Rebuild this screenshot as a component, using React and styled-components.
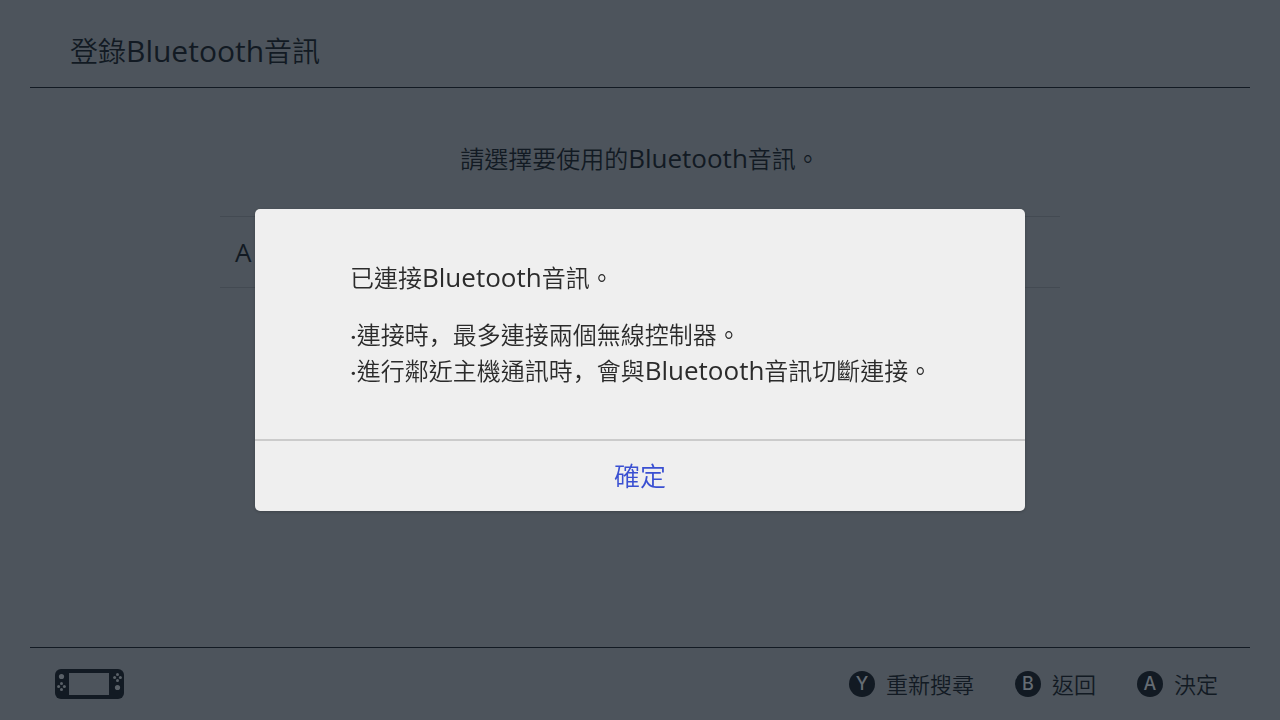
import React from "react";
import styled, { createGlobalStyle } from "styled-components";

const App = () => {
  const [modalOn, setModalOn] = React.useState(true);

  const closeModal = () => {
    setModalOn(false);
  };

  return (
    <>
      <GlobalStyle />
      <Page>
        <Header>
          <Title>
            登錄<Latin size={30}>Bluetooth</Latin>音訊
          </Title>
        </Header>

        <Content>
          <Guide>
            請選擇要使用的<Latin>Bluetooth</Latin>音訊。
          </Guide>
          <DeviceList>
            <li>
              <Device type="button">A</Device>
            </li>
          </DeviceList>
        </Content>

        <Footer>
          <ConsoleIcon />
          <Actions>
            <Action label="Y">重新搜尋</Action>
            <Action label="B">返回</Action>
            <Action label="A">決定</Action>
          </Actions>
        </Footer>
      </Page>

      {modalOn && (
        <Overlay>
          <Dialog role="dialog" aria-modal="true" aria-labelledby="dialog-title">
            <DialogBody>
              <Message id="dialog-title">
                已連接<Latin>Bluetooth</Latin>音訊。
              </Message>
              <Notes>
                <li>
                  <Dot>·</Dot>連接時<Comma>，</Comma>最多連接兩個無線控制器。
                </li>
                <li>
                  <Dot>·</Dot>進行鄰近主機通訊時<Comma>，</Comma>會與
                  <Latin>Bluetooth</Latin>音訊切斷連接。
                </li>
              </Notes>
            </DialogBody>
            <Confirm type="button" onClick={closeModal}>
              確定
            </Confirm>
          </Dialog>
        </Overlay>
      )}
    </>
  );
};

export default App;

const Action = ({ label, children }) => (
  <ActionButton type="button">
    <Badge>{label}</Badge>
    <ActionText>{children}</ActionText>
  </ActionButton>
);

const ConsoleIcon = () => (
  <svg width="70" height="30" viewBox="0 0 70 30" aria-hidden="true">
    <rect width="69" height="30" rx="6" fill="#121a23" />
    <rect x="14" y="4" width="40" height="22" fill="#4d545c" />
    <g fill="#5a6168">
      <circle cx="6.5" cy="7.5" r="2.6" />
      <circle cx="6.5" cy="14.6" r="1.5" />
      <circle cx="6.5" cy="20.4" r="1.5" />
      <circle cx="3.6" cy="17.5" r="1.5" />
      <circle cx="9.4" cy="17.5" r="1.5" />
      <circle cx="62.5" cy="5.6" r="1.5" />
      <circle cx="62.5" cy="11.4" r="1.5" />
      <circle cx="59.6" cy="8.5" r="1.5" />
      <circle cx="65.4" cy="8.5" r="1.5" />
      <circle cx="62.5" cy="18.5" r="2.6" />
    </g>
  </svg>
);

const GlobalStyle = createGlobalStyle`
  * {
    box-sizing: border-box;
  }

  body {
    margin: 0;
    background-color: #4d545c;
    color: #121a23;
    font-family: "Noto Sans CJK TC", sans-serif;
    font-weight: 350;
  }

  button {
    padding: 0;
    border: none;
    background: none;
    color: inherit;
    font: inherit;
    cursor: pointer;
  }

  ul {
    margin: 0;
    padding: 0;
    list-style: none;
  }
`;

const Page = styled.div`
  min-height: 100vh;
  display: flex;
  flex-direction: column;
  padding: 0 30px;
`;

const Header = styled.header`
  height: 88px;
  display: flex;
  align-items: center;
  padding: 12px 40px 0;
  border-bottom: 1px solid #121a23;
`;

const Title = styled.h1`
  margin: 0;
  font-size: 28px;
  font-weight: 350;
  line-height: 40px;
`;

const Latin = styled.span`
  font-family: "Open Sans", "Noto Sans", sans-serif;
  font-size: ${(props) => props.size || 26}px;
  font-weight: 400;
  line-height: 1;
`;

const Content = styled.main`
  flex: 1;
  width: 100%;
  max-width: 840px;
  margin: 0 auto;
  padding-top: 52px;
`;

const Guide = styled.p`
  margin: 0 0 40px;
  font-size: 24px;
  line-height: 36px;
  text-align: center;
`;

const DeviceList = styled.ul`
  border-top: 1px solid #434a52;
`;

const Device = styled.button`
  width: 100%;
  height: 71px;
  padding: 0 15px;
  border-bottom: 1px solid #434a52;
  font-family: "Open Sans", "Noto Sans", sans-serif;
  font-size: 26px;
  font-weight: 400;
  text-align: left;
`;

const Footer = styled.footer`
  height: 73px;
  display: flex;
  align-items: center;
  justify-content: space-between;
  padding: 0 32px 0 25px;
  border-top: 1px solid #121a23;
`;

const Actions = styled.div`
  display: flex;
  gap: 41px;
`;

const ActionButton = styled.button`
  display: flex;
  align-items: center;
  gap: 11px;
  font-size: 22px;
  line-height: 32px;
`;

const ActionText = styled.span`
  padding-bottom: 3px;
`;

const Badge = styled.span`
  width: 26px;
  height: 26px;
  display: flex;
  align-items: center;
  justify-content: center;
  border-radius: 50%;
  background-color: #121a23;
  color: #656c73;
  font-family: Inter, sans-serif;
  font-size: 18px;
  font-weight: 500;
  line-height: 26px;
`;

const Overlay = styled.div`
  position: fixed;
  inset: 0;
  display: flex;
  align-items: center;
  justify-content: center;
`;

const Dialog = styled.section`
  width: 770px;
  max-width: 100%;
  border-radius: 5px;
  background-color: #efefef;
  color: #2b2b2b;
  box-shadow: 0 1px 3px rgba(0, 0, 0, 0.2);
`;

const DialogBody = styled.div`
  padding: 50px 95px 51px;
  font-size: 24px;
  line-height: 36px;
`;

const Message = styled.p`
  margin: 0 0 21px;
`;

const Notes = styled.ul`
  white-space: nowrap;
`;

const Dot = styled.span`
  font-family: Inter, sans-serif;
  font-size: 20px;
  font-weight: 700;
  line-height: 1;
`;

/* the TC comma sits in the middle of its cell, this one at the lower left */
const Comma = styled.span`
  font-family: "Noto Sans CJK SC", sans-serif;
`;

const Confirm = styled.button`
  width: 100%;
  height: 72px;
  padding-bottom: 2px;
  border-top: 2px solid #cbcbcb;
  color: #3a50d2;
  font-size: 26px;
  line-height: 36px;
`;
